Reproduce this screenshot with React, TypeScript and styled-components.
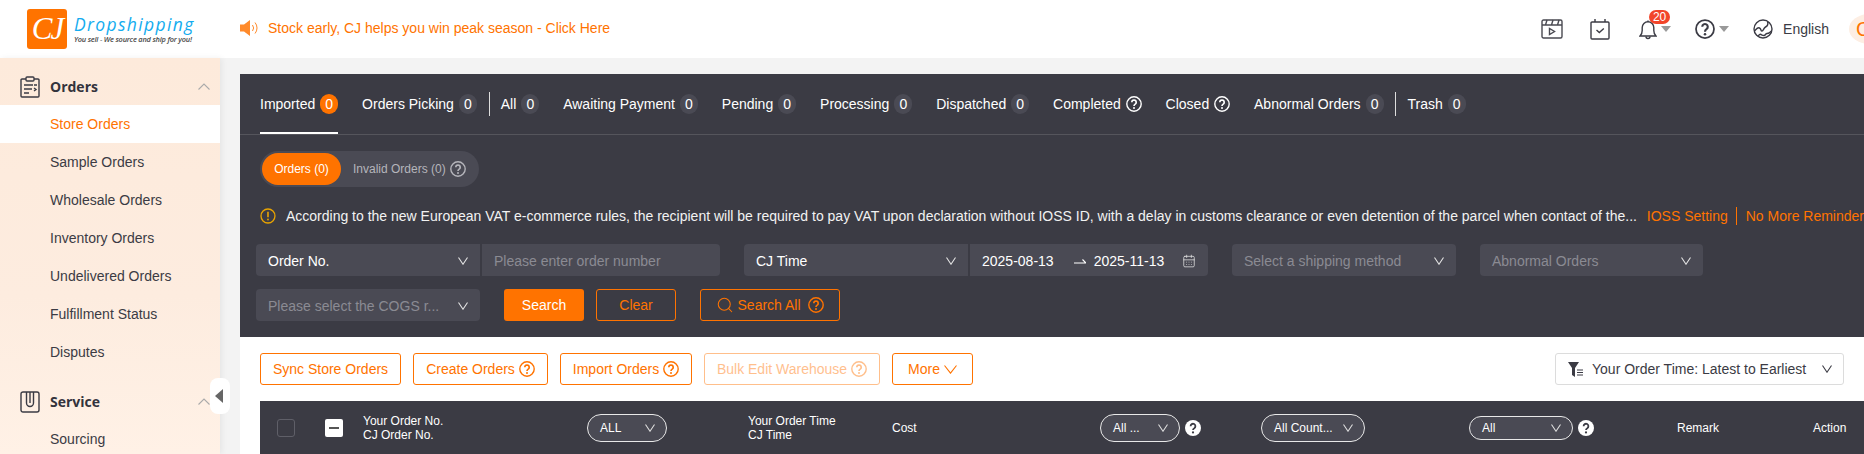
import React from 'react';
import styled, { createGlobalStyle } from 'styled-components';
import { Search as SearchIcon, CalendarDays } from 'lucide-react';

const orange = '#ff7300';
const dark = '#3b3b44';
const field = '#4a4a54';

const GlobalStyle = createGlobalStyle`
  html, body { margin: 0; padding: 0; background: #f3f3f3; }
  body { font-family: "Liberation Sans", Arial, sans-serif; font-size: 14px; color: #3b3b44; }
  * { box-sizing: border-box; }
`;

const Page = styled.div`
  width: 1864px;
  height: 454px;
  overflow: hidden;
  display: flex;
  flex-direction: column;
`;

const Header = styled.header`
  height: 58px;
  flex: none;
  background: #fff;
  display: flex;
  align-items: center;
  padding-left: 27px;
`;

const LogoMark = styled.div`
  width: 40px;
  height: 40px;
  background: ${orange};
  border-radius: 3px;
  color: #fff;
  display: flex;
  align-items: center;
  justify-content: center;
  font: italic 31px "Liberation Serif", serif;
  letter-spacing: -2px;
`;

const LogoText = styled.div`
  margin-left: 7px;
  width: 125px;
  display: flex;
  flex-direction: column;
`;

const LogoTitle = styled.div`
  color: #14acef;
  font: italic 17.5px/20px "Open Sans", sans-serif;
  letter-spacing: 1.35px;
`;

const LogoTag = styled.div`
  color: #4a4a4a;
  font: italic 600 7.4px/11px "Open Sans", sans-serif;
  letter-spacing: -0.2px;
  white-space: nowrap;
`;

const Notice = styled.div`
  margin: -2px 0 0 41px;
  display: flex;
  align-items: center;
  gap: 10px;
  color: ${orange};
  font-size: 14px;
`;

const HeaderRight = styled.div`
  margin-left: auto;
  display: flex;
  align-items: center;
  color: #3b3b44;
`;

const HeaderIcon = styled.div<{ $gap: number }>`
  position: relative;
  display: flex;
  align-items: center;
  margin-right: ${p => p.$gap}px;
`;

const Caret = styled.span`
  width: 0;
  height: 0;
  margin-left: 4px;
  border-left: 5px solid transparent;
  border-right: 5px solid transparent;
  border-top: 6px solid #999;
`;

const Badge = styled.span`
  position: absolute;
  left: 10px;
  top: -9px;
  width: 21px;
  height: 14px;
  border-radius: 7px;
  background: #f2452a;
  color: #fff;
  font-size: 12px;
  line-height: 14px;
  text-align: center;
`;

const Avatar = styled.div`
  width: 40px;
  height: 30px;
  margin-left: 20px;
  margin-right: -25px;
  border-radius: 50%;
  background: #fdeee3;
  color: ${orange};
  font-size: 20px;
  line-height: 30px;
  padding-left: 7px;
`;

const Body = styled.div`
  flex: 1;
  display: flex;
  min-height: 0;
`;

const Sidebar = styled.aside`
  position: relative;
  width: 220px;
  flex: none;
  background: linear-gradient(180deg, #fdeadb 0%, #fdecdf 60%, #fff1e6 100%);
  box-shadow: 2px 0 6px rgba(0, 0, 0, 0.06);
`;

const GroupTitle = styled.div<{ $top: number }>`
  height: 47px;
  margin-top: ${p => p.$top}px;
  padding: 10px 10px 0 20px;
  display: flex;
  align-items: center;
  gap: 10px;
  font: 700 14px "Open Sans", sans-serif;
  color: #33333c;
  svg:last-child { margin-left: auto; }
`;

const NavItem = styled.div<{ $active?: boolean }>`
  height: 38px;
  padding-left: 50px;
  line-height: 38px;
  font-size: 14px;
  background: ${p => (p.$active ? '#fff' : 'transparent')};
  color: ${p => (p.$active ? orange : '#3b3b44')};
`;

const Collapse = styled.div`
  position: absolute;
  left: 210px;
  top: 320px;
  width: 20px;
  height: 36px;
  border-radius: 8px;
  background: #fff;
  display: flex;
  align-items: center;
  justify-content: center;
  &::before {
    content: '';
    margin-right: 2px;
    border-top: 7px solid transparent;
    border-bottom: 7px solid transparent;
    border-right: 8px solid #666;
  }
`;

const Main = styled.main`
  flex: 1;
  min-width: 0;
  margin: 16px 0 0 20px;
  background: #fff;
`;

const Panel = styled.section`
  height: 263px;
  background: ${dark};
  color: #fff;
`;

const Tabs = styled.nav`
  height: 61px;
  padding-left: 20px;
  display: flex;
  align-items: flex-start;
  border-bottom: 1px solid #55555c;
`;

const Tab = styled.div<{ $active?: boolean }>`
  position: relative;
  height: 60px;
  margin-right: 23.85px;
  padding-top: 20px;
  display: flex;
  align-items: flex-start;
  gap: 5px;
  line-height: 20px;
  white-space: nowrap;
  svg { margin-top: 2px; }
  ${p => p.$active && `
    &::after {
      content: '';
      position: absolute;
      left: 0;
      right: 0;
      bottom: 0;
      height: 2px;
      background: #fff;
    }
  `}
`;

const Count = styled.span<{ $on?: boolean }>`
  width: 18px;
  height: 20px;
  border-radius: 9px;
  background: ${p => (p.$on ? orange : field)};
  text-align: center;
  font-size: 14px;
  line-height: 20px;
`;

const TabRule = styled.span`
  width: 1px;
  height: 24px;
  margin: 18px 11px 0 -12px;
  background: #ddd;
`;

const Toggle = styled.div`
  margin: 16px 0 0 20px;
  width: 219px;
  height: 36px;
  padding: 2px;
  border-radius: 18px;
  background: ${field};
  display: flex;
  align-items: center;
  font-size: 12px;
`;

const ToggleOn = styled.div`
  width: 79px;
  height: 32px;
  border-radius: 16px;
  background: ${orange};
  text-align: center;
  line-height: 32px;
`;

const ToggleOff = styled.div`
  margin-left: 12px;
  display: flex;
  align-items: center;
  gap: 4px;
  color: #b5b5bb;
`;

const WarningRow = styled.div`
  height: 20px;
  margin: 19px 0 0 20px;
  display: flex;
  align-items: center;
  white-space: nowrap;
  color: #f2f2f2;
`;

const WarnText = styled.span`
  margin-left: 10px;
  width: 1363px;
`;

const WarnLink = styled.span`
  color: ${orange};
`;

const WarnRule = styled.span`
  width: 1px;
  height: 18px;
  margin: 0 9px 0 8px;
  background: ${orange};
`;

const FilterRow = styled.div<{ $top: number }>`
  margin: ${p => p.$top}px 0 0 16px;
  display: flex;
  align-items: center;
  gap: 24px;
`;

const Joined = styled.div`
  display: flex;
  gap: 2px;
`;

const Select = styled.div<{ $w: number; $muted?: boolean; $side?: 'l' | 'r' }>`
  width: ${p => p.$w}px;
  height: 32px;
  padding: 1px 12px 0;
  background: ${field};
  border-radius: ${p => (p.$side === 'l' ? '4px 0 0 4px' : p.$side === 'r' ? '0 4px 4px 0' : '4px')};
  color: ${p => (p.$muted ? '#8b8b93' : '#fff')};
  display: flex;
  align-items: center;
  justify-content: space-between;
  white-space: nowrap;
  svg { color: #e4e4e4; flex: none; }
`;

const DateRange = styled.div`
  display: flex;
  align-items: center;
  gap: 8px;
`;

const DateText = styled.span<{ $first?: boolean }>`
  color: #fff;
  margin-right: ${p => (p.$first ? '12px' : 0)};
`;

const ButtonGroup = styled.div`
  display: flex;
  align-items: center;
  gap: 12px;
`;

const Primary = styled.button`
  width: 80px;
  height: 32px;
  border: 0;
  border-radius: 3px;
  background: ${orange};
  color: #fff;
  font: 14px "Liberation Sans", sans-serif;
`;

const Outline = styled.button<{ $w: number; $disabled?: boolean }>`
  width: ${p => p.$w}px;
  height: 32px;
  padding: 0;
  border: 1px solid ${orange};
  border-radius: 3px;
  background: transparent;
  color: ${orange};
  font: 14px "Liberation Sans", sans-serif;
  display: inline-flex;
  align-items: center;
  justify-content: center;
  gap: 4px;
  opacity: ${p => (p.$disabled ? 0.45 : 1)};
`;

const Toolbar = styled.div`
  height: 64px;
  padding: 16px 20px;
  display: flex;
  align-items: center;
  gap: 12px;
`;

const SortBox = styled.div`
  margin-left: auto;
  width: 289px;
  height: 32px;
  padding: 0 11px 0 12px;
  border: 1px solid #dcdcdc;
  border-radius: 3px;
  color: #3b3b44;
  display: flex;
  align-items: center;
  gap: 8px;
  white-space: nowrap;
  svg:last-child { margin-left: auto; }
`;

const TableHead = styled.div`
  margin-left: 20px;
  height: 70px;
  padding: 13px 0 0 17px;
  background: ${dark};
  color: #fff;
  font-size: 12px;
  line-height: 14px;
  display: grid;
  grid-template-columns: 48px 38px 224px 161px 144px 208px 161px 208px 208px 136px 1fr;
  align-items: start;
`;

const Cell = styled.div`
  display: flex;
  align-items: center;
  height: 28px;
  gap: 5px;
  white-space: nowrap;
`;

const Stack = styled.div`
  height: 28px;
`;

const Check = styled.span`
  width: 18px;
  height: 18px;
  border: 1.5px solid #5f5f68;
  border-radius: 3px;
`;

const Minus = styled.span`
  width: 18px;
  height: 18px;
  border-radius: 2px;
  background: #fff;
  display: flex;
  align-items: center;
  justify-content: center;
  &::before {
    content: '';
    width: 10px;
    height: 2px;
    background: #555;
  }
`;

const Pill = styled.div<{ $w: number; $h?: number }>`
  width: ${p => p.$w}px;
  height: ${p => p.$h ?? 28}px;
  padding: 0 11px 0 12px;
  border: 1px solid #e8e8e8;
  border-radius: 14px;
  background: ${field};
  display: flex;
  align-items: center;
  justify-content: space-between;
  svg { color: #ddd; }
`;

const Help = ({ size = 16, color = 'currentColor' }: { size?: number; color?: string }) => (
  <svg width={size} height={size} viewBox="0 0 16 16" fill="none" stroke={color} strokeWidth="1.4">
    <circle cx="8" cy="8" r="7.2" />
    <path d="M5.800 6.200a2.200 2.200 0 1 1 3.400 1.900c-.8.5-1.200 1-1.200 2" strokeWidth="1.700" />
    <circle cx="8" cy="12.100" r="1" fill={color} stroke="none" />
  </svg>
);

const HelpSolid = () => (
  <svg width="16" height="16" viewBox="0 0 16 16">
    <circle cx="8" cy="8" r="8" fill="#fff" />
    <path d="M5.600 6.200a2.400 2.400 0 1 1 3.700 2c-.9.5-1.300.9-1.300 1.800" fill="none" stroke={dark} strokeWidth="1.800" />
    <circle cx="8" cy="12.400" r="1.100" fill={dark} />
  </svg>
);

const Vee = ({ w = 10, h = 8, color = 'currentColor' }: { w?: number; h?: number; color?: string }) => (
  <svg width={w} height={h} viewBox={`0 0 ${w} ${h}`} fill="none" stroke={color} strokeWidth="1.100">
    <path d={`M.5 .5L${w / 2} ${h - 0.8}L${w - 0.5} .5`} />
  </svg>
);

const Caretup = () => (
  <svg width="12" height="7" viewBox="0 0 12 7" fill="none" stroke="#aaa" strokeWidth="1.100">
    <path d="M.5 6.500L6 1l5.500 5.500" />
  </svg>
);

const HalfArrow = () => (
  <svg width="12" height="8" viewBox="0 0 12 8" fill="none" stroke="#fff" strokeWidth="1.200">
    <path d="M0 6h12L8.500 2.500" />
  </svg>
);

const OrdersIcon = () => (
  <svg width="20" height="22" viewBox="0 0 20 22" fill="none" stroke="#3b3b44" strokeWidth="1.400">
    <path d="M6 3H2a1 1 0 0 0-1 1v16a1 1 0 0 0 1 1h16a1 1 0 0 0 1-1V4a1 1 0 0 0-1-1h-4" />
    <rect x="6" y="1" width="8" height="4" rx="1" />
    <path d="M4 9h9M4 13h8M4 17h5M14 12l2 1.500-2 1.500M14 9h3" />
  </svg>
);

const ServiceIcon = () => (
  <svg width="20" height="22" viewBox="0 0 20 22" fill="none" stroke="#3b3b44" strokeWidth="1.400">
    <rect x="1" y="1" width="18" height="20" rx="2" />
    <path d="M6.500 1v11a3.500 3.500 0 0 0 7 0V1" />
    <path d="M10 1v11" />
  </svg>
);

const Speaker = () => (
  <svg width="18" height="18" viewBox="0 0 18 18" fill="none">
    <path d="M0 5.500h4L10 1v16l-6-4.500H0z" fill="#ff8a2b" />
    <path d="M12.500 6a5 5 0 0 1 0 6M15 3.500a8.500 8.500 0 0 1 0 11" stroke="#ff8a2b" strokeWidth="1" />
  </svg>
);

const VideoIcon = () => (
  <svg width="22" height="20" viewBox="0 0 22 20" fill="none" stroke="#4a4a52" strokeWidth="1.400">
    <rect x="1" y="1" width="20" height="18" rx="1.500" />
    <path d="M1 6h20M6 1 4.500 6M12 1l-1.500 5M18 1l-1.500 5" />
    <path d="M8.500 9.500v6l5-3z" />
  </svg>
);

const TaskIcon = () => (
  <svg width="20" height="21" viewBox="0 0 20 21" fill="none" stroke="#3b3b44" strokeWidth="1.400">
    <rect x="1" y="3" width="18" height="17" rx="1" />
    <path d="M5 0v3M15 0v3M6.500 11l2.800 2.500 4.500-4" />
  </svg>
);

const BellIcon = () => (
  <svg width="18" height="21" viewBox="0 0 18 21" fill="none" stroke="#3b3b44" strokeWidth="1.400">
    <path d="M1 17h16c-1.600-1.400-2.200-3-2.200-5.500V8.500A5.800 5.800 0 0 0 3.200 8.500v3C3.200 14 2.600 15.600 1 17z" />
    <path d="M7 17.500a2 2 0 0 0 4 0" />
    <path d="M9 1.500v1" />
  </svg>
);

const GlobeIcon = () => (
  <svg width="20" height="20" viewBox="0 0 20 20" fill="none" stroke="#3b3b44" strokeWidth="1.400">
    <circle cx="10" cy="10" r="9" />
    <path d="M1.500 12c2-2 3-4 5-3s1 3 2.500 3 1.500-3 3.500-4 3-3 2-5M5 17.500c1-2 2-2.500 3-2s1.500 1 3 1 1.500-2 3-2 3-1 4.500-2.500" />
  </svg>
);

const FilterIcon = () => (
  <svg width="16" height="15" viewBox="0 0 16 15">
    <path d="M0 0h11L7 6v9L4 13V6z" fill="#3b3b44" />
    <path d="M9 8h6M9 10.500h6M9 13h6" stroke="#3b3b44" strokeWidth="1.200" />
  </svg>
);

const WarnIcon = () => (
  <svg width="16" height="16" viewBox="0 0 16 16" fill="none" stroke="#e9a400" strokeWidth="1.300">
    <circle cx="8" cy="8" r="7" />
    <path d="M8 3.800v5.400" strokeWidth="1.600" />
    <circle cx="8" cy="11.500" r=".9" fill="#e9a400" stroke="none" />
  </svg>
);

const tabs = [
  { label: 'Imported', count: 0, active: true },
  { label: 'Orders Picking', count: 0, rule: true },
  { label: 'All', count: 0 },
  { label: 'Awaiting Payment', count: 0 },
  { label: 'Pending', count: 0 },
  { label: 'Processing', count: 0 },
  { label: 'Dispatched', count: 0 },
  { label: 'Completed' },
  { label: 'Closed' },
  { label: 'Abnormal Orders', count: 0, rule: true },
  { label: 'Trash', count: 0 },
];

const orderItems = ['Store Orders', 'Sample Orders', 'Wholesale Orders', 'Inventory Orders', 'Undelivered Orders', 'Fulfillment Status', 'Disputes'];

export default function App() {
  return (
    <Page>
      <GlobalStyle />
      <Header>
        <LogoMark>CJ</LogoMark>
        <LogoText>
          <LogoTitle>Dropshipping</LogoTitle>
          <LogoTag>You sell - We source and ship for you!</LogoTag>
        </LogoText>
        <Notice>
          <Speaker />
          Stock early, CJ helps you win peak season - Click Here
        </Notice>
        <HeaderRight>
          <HeaderIcon $gap={27}><VideoIcon /></HeaderIcon>
          <HeaderIcon $gap={29}><TaskIcon /></HeaderIcon>
          <HeaderIcon $gap={24}>
            <BellIcon />
            <Badge>20</Badge>
            <Caret />
          </HeaderIcon>
          <HeaderIcon $gap={24}>
            <Help size={20} color="#3b3b44" />
            <Caret />
          </HeaderIcon>
          <HeaderIcon $gap={10}><GlobeIcon /></HeaderIcon>
          English
          <Avatar>C</Avatar>
        </HeaderRight>
      </Header>
      <Body>
        <Sidebar>
          <GroupTitle $top={0}>
            <OrdersIcon />
            Orders
            <Caretup />
          </GroupTitle>
          {orderItems.map((item, i) => (
            <NavItem key={item} $active={i === 0}>{item}</NavItem>
          ))}
          <GroupTitle $top={2}>
            <ServiceIcon />
            Service
            <Caretup />
          </GroupTitle>
          <NavItem>Sourcing</NavItem>
          <Collapse />
        </Sidebar>
        <Main>
          <Panel>
            <Tabs>
              {tabs.map(t => (
                <React.Fragment key={t.label}>
                  <Tab $active={t.active}>
                    {t.label}
                    {t.count !== undefined ? <Count $on={t.active}>{t.count}</Count> : <Help size={16} />}
                  </Tab>
                  {t.rule && <TabRule />}
                </React.Fragment>
              ))}
            </Tabs>
            <Toggle>
              <ToggleOn>Orders (0)</ToggleOn>
              <ToggleOff>Invalid Orders (0) <Help size={16} /></ToggleOff>
            </Toggle>
            <WarningRow>
              <WarnIcon />
              <WarnText>According to the new European VAT e-commerce rules, the recipient will be required to pay VAT upon declaration without IOSS ID, with a delay in customs clearance or even detention of the parcel when contact of the...</WarnText>
              <WarnLink>IOSS Setting</WarnLink>
              <WarnRule />
              <WarnLink>No More Reminder</WarnLink>
            </WarningRow>
            <FilterRow $top={18}>
              <Joined>
                <Select $w={224} $side="l">Order No.<Vee /></Select>
                <Select $w={238} $side="r" $muted>Please enter order number</Select>
              </Joined>
              <Joined>
                <Select $w={224} $side="l">CJ Time<Vee /></Select>
                <Select $w={238} $side="r">
                  <DateRange>
                    <DateText $first>2025-08-13</DateText>
                    <HalfArrow />
                    <DateText>2025-11-13</DateText>
                  </DateRange>
                  <CalendarDays size={14} strokeWidth={1.3} />
                </Select>
              </Joined>
              <Select $w={224} $muted>Select a shipping method<Vee /></Select>
              <Select $w={223} $muted>Abnormal Orders<Vee /></Select>
            </FilterRow>
            <FilterRow $top={13}>
              <Select $w={224} $muted>Please select the COGS r...<Vee /></Select>
              <ButtonGroup>
                <Primary>Search</Primary>
                <Outline $w={80}>Clear</Outline>
              </ButtonGroup>
              <Outline $w={140}>
                <SearchIcon size={18} strokeWidth={1.4} />
                Search All&nbsp;
                <Help size={16} />
              </Outline>
            </FilterRow>
          </Panel>
          <Toolbar>
            <Outline $w={141}>Sync Store Orders</Outline>
            <Outline $w={135}>Create Orders <Help /></Outline>
            <Outline $w={132}>Import Orders <Help /></Outline>
            <Outline $w={176} $disabled>Bulk Edit Warehouse <Help /></Outline>
            <Outline $w={81}>More <Vee w={13} h={9} /></Outline>
            <SortBox>
              <FilterIcon />
              Your Order Time: Latest to Earliest
              <Vee />
            </SortBox>
          </Toolbar>
          <TableHead>
            <Cell><Check /></Cell>
            <Cell><Minus /></Cell>
            <Stack>Your Order No.<br />CJ Order No.</Stack>
            <Cell><Pill $w={80}>ALL<Vee /></Pill></Cell>
            <Stack>Your Order Time<br />CJ Time</Stack>
            <Cell>Cost</Cell>
            <Cell><Pill $w={80}>All ...<Vee /></Pill><HelpSolid /></Cell>
            <Cell><Pill $w={104}>All Count...<Vee /></Pill></Cell>
            <Cell><Pill $w={104} $h={24}>All<Vee /></Pill><HelpSolid /></Cell>
            <Cell>Remark</Cell>
            <Cell>Action</Cell>
          </TableHead>
        </Main>
      </Body>
    </Page>
  );
}
